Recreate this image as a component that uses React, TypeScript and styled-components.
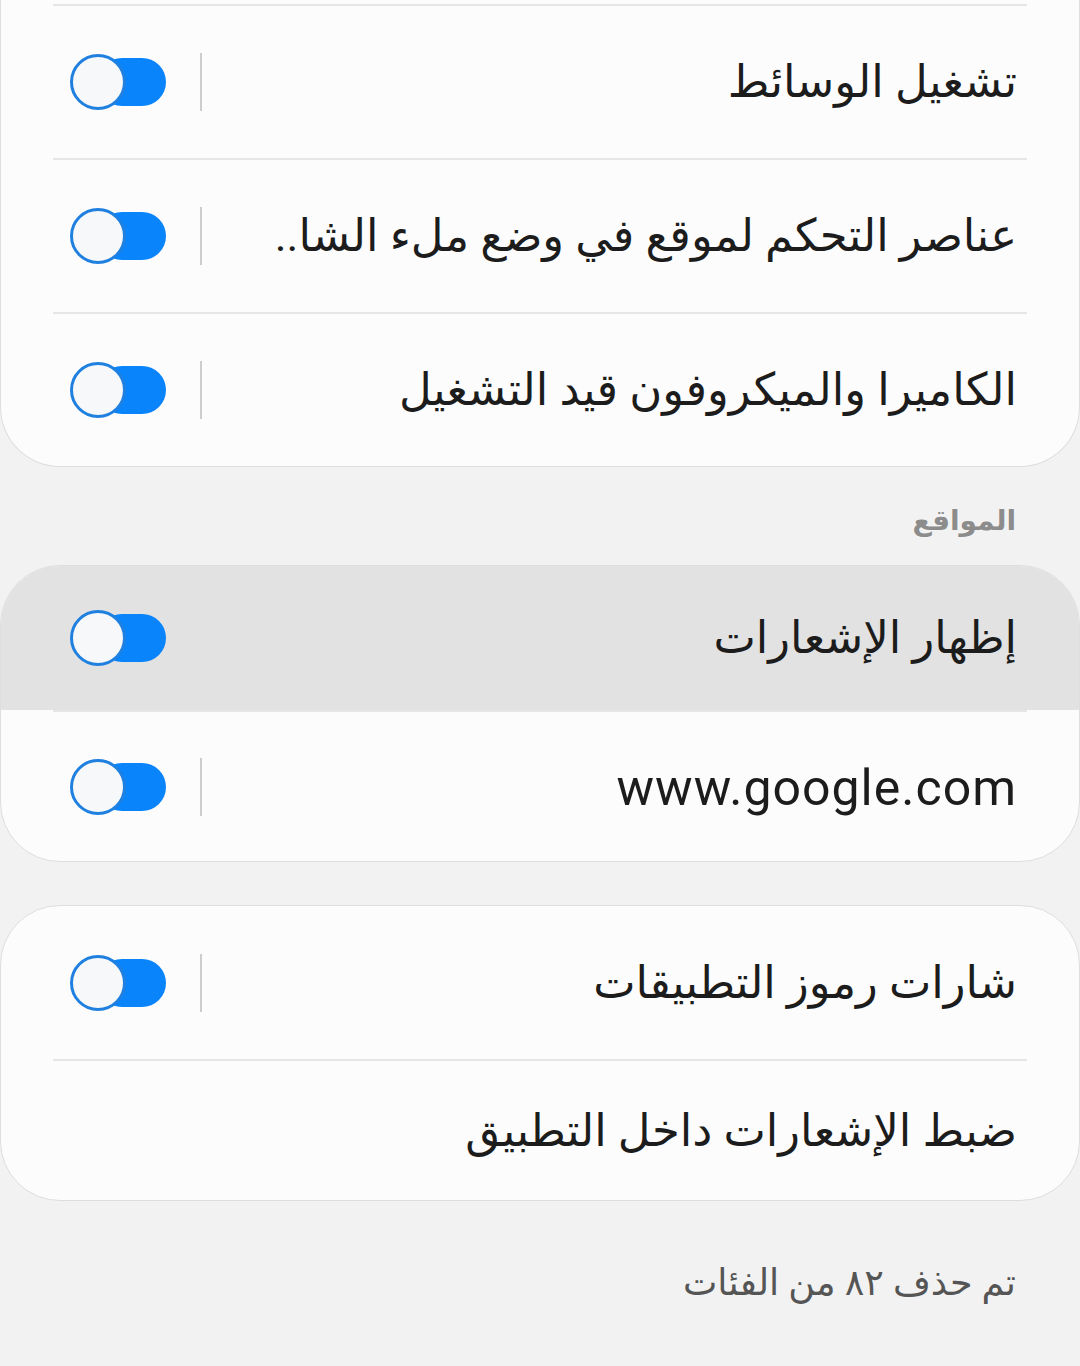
import { FC } from 'react';
import styled, { createGlobalStyle } from 'styled-components';

const GlobalStyle = createGlobalStyle`
  html, body {
    margin: 0;
    padding: 0;
    background: #f2f2f2;
  }
  body {
    font-family: Roboto, "DejaVu Sans", sans-serif;
    overflow: hidden;
  }
`;

interface IRowProps {
  label: string;
  height: number;
  toggle?: boolean;
  active?: boolean;
  latin?: boolean;
}

const Switch: FC = () => (
  <SwitchWrapper>
    <Track />
    <Thumb />
  </SwitchWrapper>
);

const SettingRow: FC<IRowProps> = ({ label, height, toggle = true, active, latin }: IRowProps) => (
  <Row $height={height} $active={active}>
    <Label $latin={latin}>{label}</Label>
    {toggle && (
      <Controls>
        {!active && <Separator />}
        <Switch />
      </Controls>
    )}
  </Row>
);

const App: FC = () => {
  return (
    <Page dir="rtl">
      <GlobalStyle />
      <Card $cut>
        <Divider />
        <SettingRow label="تشغيل الوسائط" height={152} />
        <Divider />
        <SettingRow label="عناصر التحكم لموقع في وضع ملء الشا.." height={152} />
        <Divider />
        <SettingRow label="الكاميرا والميكروفون قيد التشغيل" height={152} />
      </Card>

      <SectionTitle>المواقع</SectionTitle>

      <Card>
        <SettingRow label="إظهار الإشعارات" height={144} active />
        <Divider />
        <SettingRow label="www.google.com" height={149} latin />
      </Card>

      <Card $spaced>
        <SettingRow label="شارات رموز التطبيقات" height={153} />
        <Divider />
        <SettingRow label="ضبط الإشعارات داخل التطبيق" height={139} toggle={false} />
      </Card>

      <Footer>تم حذف ٨٢ من الفئات</Footer>
    </Page>
  );
};

export default App;

const Page = styled.div`
  width: 1080px;
  height: 1366px;
  background: #f2f2f2;
  display: flex;
  flex-direction: column;
`;

const Card = styled.div<{ $cut?: boolean; $spaced?: boolean }>`
  display: flex;
  flex-direction: column;
  background: #fcfcfc;
  border: 1px solid #dedede;
  border-radius: 60px;
  overflow: hidden;
  margin-top: ${({ $spaced }) => ($spaced ? '43px' : '0')};

  ${({ $cut }) =>
    $cut &&
    `
    border-top: none;
    border-top-left-radius: 0;
    border-top-right-radius: 0;
    padding-top: 4px;
  `}
`;

const Divider = styled.div`
  height: 2px;
  margin: 0 52px;
  background: #e6e6e6;
  flex-shrink: 0;
`;

const Row = styled.div<{ $height: number; $active?: boolean }>`
  display: flex;
  align-items: center;
  gap: 36px;
  height: ${({ $height }) => $height}px;
  padding: 0 62px 0 69px;
  background: ${({ $active }) => ($active ? '#e2e2e2' : 'transparent')};
  box-sizing: border-box;
`;

const Label = styled.div<{ $latin?: boolean }>`
  flex: 1;
  min-width: 0;
  white-space: nowrap;
  overflow: hidden;
  color: #1c1c1c;
  font-size: ${({ $latin }) => ($latin ? '50px' : '45px')};
  letter-spacing: ${({ $latin }) => ($latin ? '1px' : '0')};
  line-height: 1.2;
  padding-top: ${({ $latin }) => ($latin ? '2px' : '0')};
`;

const Controls = styled.div`
  display: flex;
  align-items: center;
  gap: 34px;
`;

const Separator = styled.div`
  width: 2px;
  height: 58px;
  background: #cdcdcd;
`;

const SwitchWrapper = styled.div`
  position: relative;
  width: 96px;
  height: 56px;
  flex-shrink: 0;
`;

const Track = styled.div`
  position: absolute;
  left: 28px;
  top: 4px;
  width: 68px;
  height: 48px;
  border-radius: 24px;
  background: #0a84fa;
`;

const Thumb = styled.div`
  position: absolute;
  left: 0;
  top: 0;
  width: 56px;
  height: 56px;
  box-sizing: border-box;
  border-radius: 50%;
  border: 3px solid #1f80e0;
  background: #f7f8fa;
`;

const SectionTitle = styled.div`
  height: 98px;
  display: flex;
  align-items: center;
  padding: 8px 64px 0;
  box-sizing: border-box;
  font-size: 28px;
  font-weight: 700;
  color: #8c8c8c;
`;

const Footer = styled.div`
  padding: 60px 64px 0;
  font-size: 36.5px;
  color: #555555;
`;
